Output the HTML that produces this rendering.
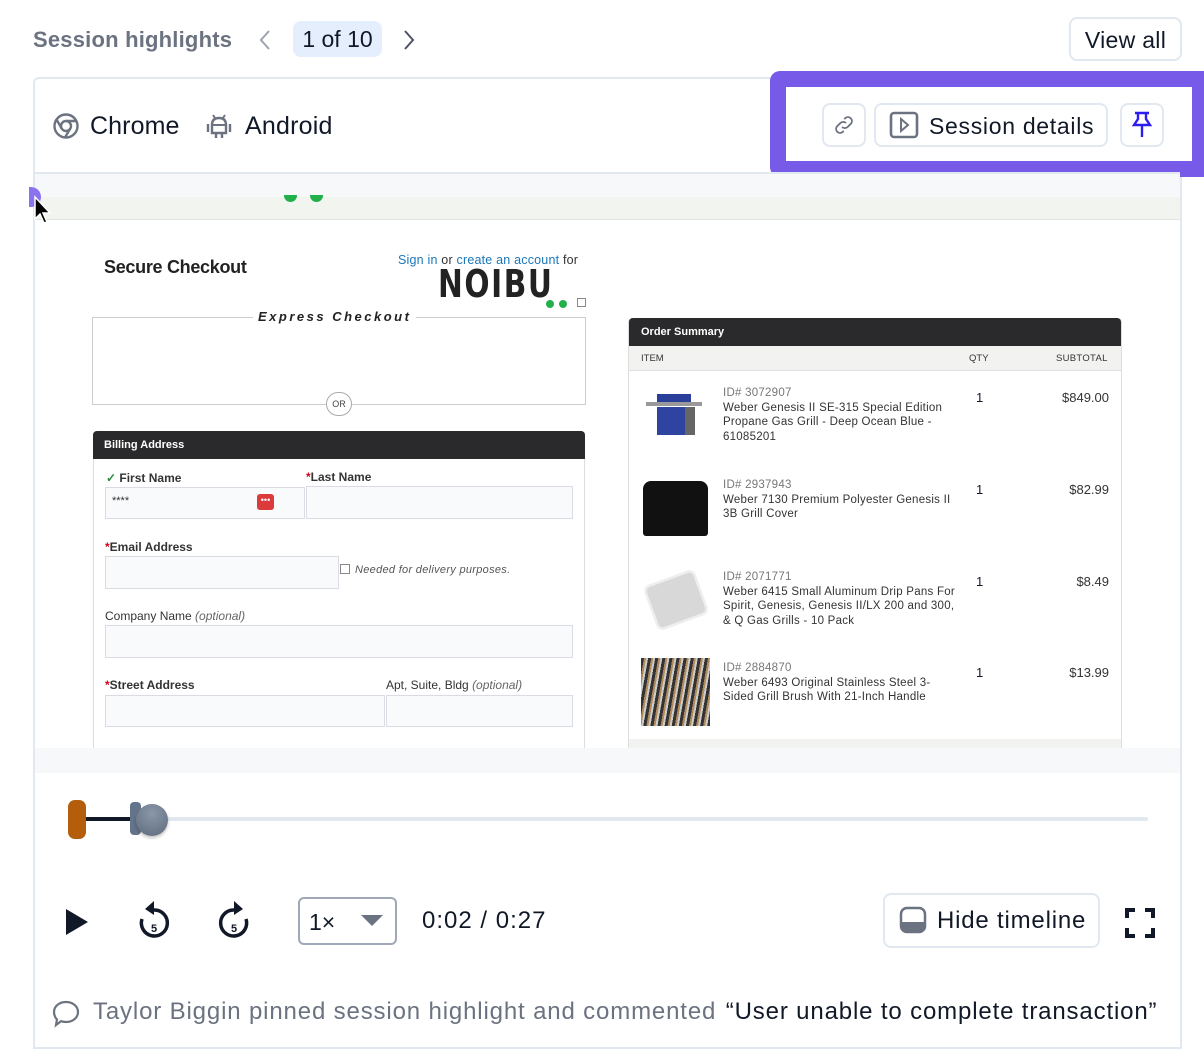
<!DOCTYPE html>
<html><head><meta charset="utf-8"><style>
*{box-sizing:border-box;margin:0;padding:0}
body{width:1204px;height:1062px;background:#fff;font-family:"Liberation Sans",Arial,sans-serif;position:relative;overflow:hidden;color:#111827}
.a{position:absolute}
.btn{position:absolute;border:2px solid #e2e8f0;border-radius:8px;background:#fff}
.in{position:absolute;border:1px solid #d9dde3;background:#f9fafb}
.lbl{position:absolute;font-size:12px;font-weight:bold;color:#333}
.red{color:#d0021b}
.it{font-size:11.5px;color:#333;line-height:14.5px;letter-spacing:0.25px}
.it .id{color:#777}
</style></head><body>
<div class="a" style="left:33px;top:27px;font-size:22px;color:#6b7280;font-weight:bold;letter-spacing:0.2px">Session highlights</div>
<svg class="a" style="left:256px;top:28px" width="18" height="24" viewBox="0 0 18 24"><path d="M13 3 L5 12 L13 21" stroke="#9ca3af" stroke-width="2" fill="none"/></svg>
<div class="a" style="left:293px;top:21px;width:89px;height:36px;background:#e5eefc;border-radius:8px;font-size:23px;text-align:center;line-height:37px;color:#111827">1 of 10</div>
<svg class="a" style="left:400px;top:28px" width="18" height="24" viewBox="0 0 18 24"><path d="M5 3 L13 12 L5 21" stroke="#4b5563" stroke-width="2" fill="none"/></svg>
<div class="btn" style="left:1069px;top:17px;width:113px;height:44px;font-size:23px;line-height:42px;text-align:center;letter-spacing:0.3px">View all</div>

<div class="a" style="left:33px;top:77px;width:1149px;height:972px;border:2px solid #e2e8f0;border-radius:6px 6px 0 0"></div>
<svg class="a" style="left:52px;top:112px" width="28" height="28" viewBox="0 0 28 28"><circle cx="14" cy="14" r="11.5" stroke="#6b7280" stroke-width="2.4" fill="none"/><circle cx="14" cy="14" r="5" stroke="#6b7280" stroke-width="2.4" fill="none"/><path d="M14 9 H25 M9.7 16.5 L4.5 7.5 M18.3 16.5 L13 25.5" stroke="#6b7280" stroke-width="2.4"/></svg>
<div class="a" style="left:90px;top:112px;font-size:25px;letter-spacing:0.1px">Chrome</div>
<svg class="a" style="left:206px;top:111px" width="26" height="28" viewBox="0 0 26 28"><path d="M7 4 L9 7 M19 4 L17 7" stroke="#6b7280" stroke-width="2"/><path d="M6 14 Q6 7 13 7 Q20 7 20 14 V22 H6 Z" stroke="#6b7280" stroke-width="2.4" fill="none"/><path d="M6 14 H20" stroke="#6b7280" stroke-width="2"/><path d="M2 13 V21 M24 13 V21 M10 22 V27 M16 22 V27" stroke="#6b7280" stroke-width="2.4"/></svg>
<div class="a" style="left:245px;top:112px;font-size:25px;letter-spacing:0.2px">Android</div>

<div class="a" style="left:770px;top:71px;width:434px;height:106px;border:16px solid #785ae9;border-right-width:12px;border-radius:10px 0 0 10px;background:#fff"></div>
<div class="btn" style="left:822px;top:103px;width:44px;height:44px"></div>
<svg class="a" style="left:832px;top:113px" width="24" height="24" viewBox="0 0 24 24"><path d="M10 14 a4 4 0 0 0 5.6 0 l3.5-3.5 a4 4 0 0 0 -5.6-5.6 l-1.2 1.2 M14 10 a4 4 0 0 0 -5.6 0 l-3.5 3.5 a4 4 0 0 0 5.6 5.6 l1.2-1.2" stroke="#6b7280" stroke-width="1.8" fill="none"/></svg>
<div class="btn" style="left:874px;top:103px;width:234px;height:44px"></div>
<svg class="a" style="left:889px;top:111px" width="30" height="28" viewBox="0 0 30 28"><rect x="2" y="2" width="26" height="24" rx="3" stroke="#6b7280" stroke-width="2.6" fill="none"/><path d="M12 8 L19 14 L12 20 Z" stroke="#6b7280" stroke-width="2" fill="none"/></svg>
<div class="a" style="left:929px;top:113px;font-size:23px;letter-spacing:0.7px">Session details</div>
<div class="btn" style="left:1120px;top:103px;width:44px;height:44px"></div>
<svg class="a" style="left:1130px;top:111px" width="24" height="28" viewBox="0 0 24 28"><path d="M5 2 H19 M8 2 V8 L4 14 H20 L16 8 V2 M12 14 V26" stroke="#2d1ef0" stroke-width="2.4" fill="none"/></svg>

<div class="a" style="left:35px;top:172px;width:1145px;height:2px;background:#e2e8f0"></div>
<div class="a" style="left:35px;top:174px;width:1145px;height:23px;background:#f7f8fa"></div>
<div class="a" style="left:35px;top:197px;width:1145px;height:23px;background:#f2f4ef;border-bottom:1px solid #e3e5e0"></div>
<div class="a" style="left:284px;top:195px;width:13px;height:7px;border-radius:0 0 7px 7px;background:#22b04b"></div>
<div class="a" style="left:310px;top:195px;width:13px;height:7px;border-radius:0 0 7px 7px;background:#22b04b"></div>
<div class="a" style="left:29px;top:187px;width:12px;height:20px;border-radius:0 10px 10px 0;background:#8b73f0"></div>
<svg class="a" style="left:33px;top:195px" width="24" height="32" viewBox="0 0 24 32"><path d="M2 2 L2 24 L7 19 L11 28 L14 27 L10 18 L17 18 Z" fill="#000" stroke="#fff" stroke-width="1.5"/></svg>

<div class="a" style="left:104px;top:257px;font-size:18px;font-weight:bold;color:#222;letter-spacing:-0.3px">Secure Checkout</div>
<div class="a" style="left:398px;top:253px;font-size:12.5px;color:#333;letter-spacing:0.2px"><span style="color:#1a76b8">Sign in</span> or <span style="color:#1a76b8">create an account</span> for</div>
<div class="a" style="left:438px;top:264px;font-size:38px;font-weight:900;letter-spacing:2px;color:#222;font-family:'DejaVu Sans',sans-serif;transform:scaleX(0.78);transform-origin:left top;line-height:40px">NOIBU</div>
<div class="a" style="left:546px;top:300px;width:8px;height:8px;border-radius:4px;background:#22b04b"></div>
<div class="a" style="left:559px;top:300px;width:8px;height:8px;border-radius:4px;background:#22b04b"></div>
<div class="a" style="left:577px;top:298px;width:9px;height:9px;border:1px solid #888"></div>

<div class="a" style="left:92px;top:317px;width:494px;height:88px;border:1px solid #ccc"></div>
<div class="a" style="left:253px;top:309px;background:#fff;padding:0 5px;font-size:13px;font-weight:bold;font-style:italic;letter-spacing:2.5px;color:#222">Express Checkout</div>
<div class="a" style="left:326px;top:392px;width:26px;height:24px;border-radius:12px;border:1px solid #aaa;background:#fff;font-size:9px;text-align:center;line-height:22px;color:#444">OR</div>

<div class="a" style="left:93px;top:431px;width:492px;height:330px;border:1px solid #ddd;border-radius:4px 4px 0 0"></div>
<div class="a" style="left:93px;top:431px;width:492px;height:28px;background:#2a2a2c;border-radius:4px 4px 0 0;color:#fff;font-size:11px;font-weight:bold;padding:8px 11px">Billing Address</div>
<div class="lbl" style="left:106px;top:471px"><span style="color:#2a8a3a">✓</span> First Name</div>
<div class="lbl" style="left:306px;top:470px"><span class="red">*</span>Last Name</div>
<div class="in" style="left:105px;top:487px;width:200px;height:32px"></div>
<div class="a" style="left:112px;top:495px;font-size:11px;color:#333">****</div>
<div class="a" style="left:257px;top:494px;width:17px;height:16px;background:#dc3b3b;border-radius:3px;color:#fff;font-size:9px;text-align:center;line-height:13px">•••</div>
<div class="in" style="left:306px;top:486px;width:267px;height:33px"></div>
<div class="lbl" style="left:105px;top:540px"><span class="red">*</span>Email Address</div>
<div class="in" style="left:105px;top:556px;width:234px;height:33px"></div>
<div class="a" style="left:340px;top:564px;width:10px;height:10px;border:1px solid #888;background:#fff"></div>
<div class="a" style="left:355px;top:564px;font-size:11px;font-style:italic;color:#555;letter-spacing:0.3px">Needed for delivery purposes.</div>
<div class="a" style="left:105px;top:609px;font-size:12px;color:#333">Company Name <i style="color:#666">(optional)</i></div>
<div class="in" style="left:105px;top:625px;width:468px;height:33px"></div>
<div class="lbl" style="left:105px;top:678px"><span class="red">*</span>Street Address</div>
<div class="a" style="left:386px;top:678px;font-size:12px;color:#333">Apt, Suite, Bldg <i style="color:#666">(optional)</i></div>
<div class="in" style="left:105px;top:695px;width:280px;height:32px"></div>
<div class="in" style="left:386px;top:695px;width:187px;height:32px"></div>

<div class="a" style="left:628px;top:318px;width:494px;height:440px;border:1px solid #ddd;border-radius:4px 4px 0 0"></div>
<div class="a" style="left:629px;top:318px;width:492px;height:28px;background:#2a2a2c;border-radius:4px 4px 0 0;color:#fff;font-size:11px;font-weight:bold;padding:8px 12px">Order Summary</div>
<div class="a" style="left:629px;top:346px;width:492px;height:25px;background:#f2f3f0;border-bottom:1px solid #e0e0e0;font-size:9.5px;color:#333"><span class="a" style="left:12px;top:7px">ITEM</span><span class="a" style="left:340px;top:7px">QTY</span><span class="a" style="left:427px;top:7px;letter-spacing:0.3px">SUBTOTAL</span></div>
<div class="a" style="left:629px;top:739px;width:492px;height:12px;background:#f2f3f0"></div>

<div class="a" style="left:643px;top:392px;width:62px;height:50px"><div class="a" style="left:3px;top:10px;width:56px;height:4px;background:#999"></div><div class="a" style="left:14px;top:2px;width:34px;height:8px;background:#2a3f99"></div><div class="a" style="left:14px;top:15px;width:28px;height:28px;background:#2f43a0"></div><div class="a" style="left:42px;top:15px;width:10px;height:28px;background:#666"></div></div>
<div class="a" style="left:643px;top:481px;width:65px;height:55px;background:#111;border-radius:8px 8px 3px 3px"></div>
<div class="a" style="left:644px;top:572px;width:64px;height:56px;background:#d8d8d8;border-radius:8px;transform:rotate(-20deg) scale(0.85);border:3px solid #eee"></div>
<div class="a" style="left:641px;top:658px;width:69px;height:68px;background:repeating-linear-gradient(100deg,#333 0 3px,#b08a5a 3px 5px,#ccc 5px 7px)"></div>

<div class="a it" style="left:723px;top:386px;width:232px"><span class="id">ID# 3072907</span><br>Weber Genesis II SE-315 Special Edition Propane Gas Grill - Deep Ocean Blue - 61085201</div>
<div class="a it" style="left:723px;top:478px;width:232px"><span class="id">ID# 2937943</span><br>Weber 7130 Premium Polyester Genesis II 3B Grill Cover</div>
<div class="a it" style="left:723px;top:570px;width:232px"><span class="id">ID# 2071771</span><br>Weber 6415 Small Aluminum Drip Pans For Spirit, Genesis, Genesis II/LX 200 and 300, &amp; Q Gas Grills - 10 Pack</div>
<div class="a it" style="left:723px;top:661px;width:225px"><span class="id">ID# 2884870</span><br>Weber 6493 Original Stainless Steel 3-Sided Grill Brush With 21-Inch Handle</div>
<div class="a" style="left:976px;top:390px;font-size:13px">1</div><div class="a" style="left:1030px;top:390px;width:79px;text-align:right;font-size:13px;color:#333">$849.00</div>
<div class="a" style="left:976px;top:482px;font-size:13px">1</div><div class="a" style="left:1030px;top:482px;width:79px;text-align:right;font-size:13px;color:#333">$82.99</div>
<div class="a" style="left:976px;top:574px;font-size:13px">1</div><div class="a" style="left:1030px;top:574px;width:79px;text-align:right;font-size:13px;color:#333">$8.49</div>
<div class="a" style="left:976px;top:665px;font-size:13px">1</div><div class="a" style="left:1030px;top:665px;width:79px;text-align:right;font-size:13px;color:#333">$13.99</div>

<div class="a" style="left:35px;top:748px;width:1145px;height:25px;background:#f7f8fa"></div>

<div class="a" style="left:150px;top:817px;width:998px;height:4px;background:#e2e8f0;border-radius:2px"></div>
<div class="a" style="left:78px;top:817px;width:60px;height:4px;background:#111827"></div>
<div class="a" style="left:68px;top:800px;width:18px;height:39px;background:#b45d0b;border-radius:7px"></div>
<div class="a" style="left:130px;top:802px;width:11px;height:33px;background:#64748b;border-radius:4px"></div>
<div class="a" style="left:136px;top:804px;width:32px;height:32px;background:radial-gradient(circle at 50% 30%,#8a97a8,#5d6a7c);border-radius:16px;box-shadow:0 2px 3px rgba(0,0,0,.25)"></div>

<svg class="a" style="left:64px;top:907px" width="26" height="30" viewBox="0 0 26 30"><path d="M2 2 L24 15 L2 28 Z" fill="#111827"/></svg>
<svg class="a" style="left:134px;top:899px" width="40" height="44" viewBox="0 0 40 44"><path d="M20 11 A13 13 0 1 1 8 20" stroke="#111827" stroke-width="3.5" fill="none"/><path d="M20 2 L11 10 L20 16 Z" fill="#111827"/><text x="20" y="33" font-size="11" font-weight="bold" text-anchor="middle" fill="#111827" font-family="Liberation Sans">5</text></svg>
<svg class="a" style="left:214px;top:899px" width="40" height="44" viewBox="0 0 40 44"><path d="M20 11 A13 13 0 1 0 32 20" stroke="#111827" stroke-width="3.5" fill="none"/><path d="M20 2 L29 10 L20 16 Z" fill="#111827"/><text x="20" y="33" font-size="11" font-weight="bold" text-anchor="middle" fill="#111827" font-family="Liberation Sans">5</text></svg>
<div class="a" style="left:298px;top:897px;width:99px;height:48px;border:2px solid #a0a8b8;border-radius:6px"></div>
<div class="a" style="left:309px;top:909px;font-size:23px">1×</div>
<svg class="a" style="left:360px;top:914px" width="24" height="14" viewBox="0 0 24 14"><path d="M1 1 H23 L12 12 Z" fill="#6b7280"/></svg>
<div class="a" style="left:422px;top:907px;font-size:24px;letter-spacing:1px">0:02 / 0:27</div>
<div class="btn" style="left:883px;top:893px;width:217px;height:55px"></div>
<svg class="a" style="left:899px;top:906px" width="28" height="28" viewBox="0 0 28 28"><rect x="2" y="2" width="24" height="24" rx="6" stroke="#6b7280" stroke-width="2.5" fill="none"/><path d="M2 16 H26 V20 Q26 26 20 26 H8 Q2 26 2 20 Z" fill="#6b7280"/></svg>
<div class="a" style="left:937px;top:907px;font-size:24px;letter-spacing:0.8px">Hide timeline</div>
<svg class="a" style="left:1124px;top:907px" width="32" height="32" viewBox="0 0 32 32"><path d="M3 11 V3 H11 M21 3 H29 V11 M29 21 V29 H21 M11 29 H3 V21" stroke="#111827" stroke-width="4" fill="none"/></svg>

<svg class="a" style="left:51px;top:998px" width="30" height="30" viewBox="0 0 30 30"><path d="M15 4 C22 4 27 8.5 27 14 C27 19.5 22 24 15 24 C13 24 11.5 23.7 10 23.2 L5 27 L6 21.5 C4 19.5 3 17 3 14 C3 8.5 8 4 15 4 Z" stroke="#6b7280" stroke-width="2.2" fill="none"/></svg>
<div class="a" style="left:93px;top:998px;font-size:24px;color:#6b7280;white-space:nowrap;letter-spacing:0.85px">Taylor Biggin pinned session highlight and commented <span style="color:#111827;margin-left:2px">“User unable to complete transaction”</span></div>
</body></html>
